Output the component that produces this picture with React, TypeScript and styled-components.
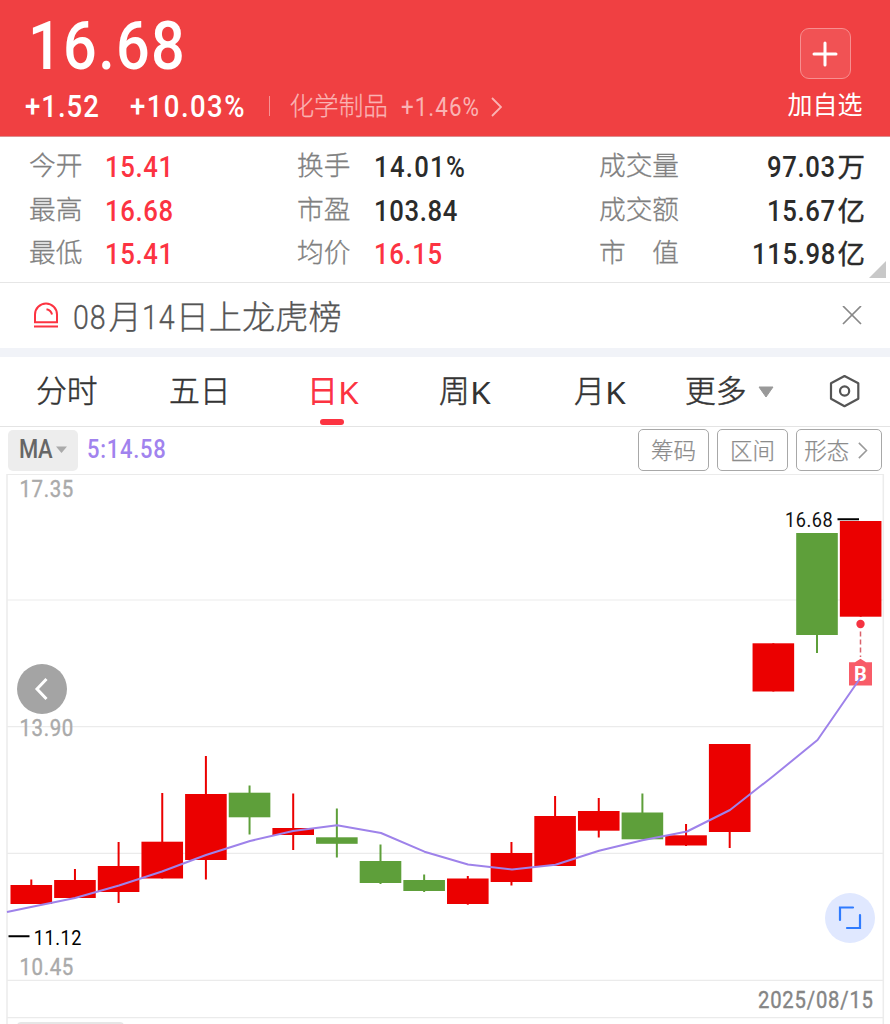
import React from 'react';
import styled, { createGlobalStyle } from 'styled-components';

const GlobalStyle = createGlobalStyle`
  * { box-sizing: border-box; }
  body {
    margin: 0;
    background: #fff;
    overflow: hidden;
    font-family: Roboto, "Noto Sans CJK SC", sans-serif;
  }
`;

const RED = '#fc3341';
const DARK = '#2b2b2b';

const Page = styled.main`
  width: 890px;
  height: 1024px;
  overflow: hidden;
  display: flex;
  flex-direction: column;
  background: #fff;
`;

/* Narrow, evenly spaced digits used for every figure on the page. */
const Num = styled.span<{ $size: number; $w: number; $color?: string; $weight?: number; $spacing?: number }>`
  display: inline-block;
  flex: none;
  width: ${p => p.$w}px;
  font-size: ${p => p.$size}px;
  font-weight: ${p => p.$weight ?? 500};
  color: ${p => p.$color ?? 'inherit'};
  letter-spacing: ${p => p.$spacing ?? 0.032}em;
  white-space: nowrap;
  transform: scaleX(0.88);
  transform-origin: 0 50%;
`;

const Header = styled.header`
  height: 137px;
  flex: none;
  display: flex;
  justify-content: space-between;
  padding: 16px 27px 0 25px;
  background: #f04042;
  border-bottom: 1px solid #dc8e8f;
  color: #fff;
`;

const PriceBlock = styled.div`
  display: flex;
  flex-direction: column;
`;

const Price = styled.div`
  height: 60px;
  line-height: 60px;
  padding-left: 3px;
`;

const ChangeRow = styled.div`
  display: flex;
  align-items: center;
  height: 40px;
  line-height: 40px;
  margin-top: 11px;
`;

const Divider = styled.i`
  width: 1px;
  height: 20px;
  margin: 0 20px 3px 0;
  background: #f79293;
`;

const Sector = styled.span`
  width: 111px;
  font-size: 24.6px;
  font-weight: 300;
  color: #fab3b3;
  -webkit-text-stroke: 0.25px #fab3b3;
`;

const AddBlock = styled.div`
  display: flex;
  flex-direction: column;
  align-items: center;
  padding-top: 12px;
  width: 76px;
`;

const AddBox = styled.button`
  width: 51px;
  height: 51px;
  padding: 0;
  border: 1.5px solid #f78f90;
  border-radius: 9px;
  background: #f15254;
  display: flex;
  align-items: center;
  justify-content: center;
`;

const AddLabel = styled.span`
  font-size: 25px;
  line-height: 36px;
  margin-top: 9px;
  white-space: nowrap;
`;

const Stats = styled.section`
  position: relative;
  flex: none;
  height: 146px;
  padding: 9px 25px 0 29px;
  border-bottom: 1px solid #e6e6e6;
  display: grid;
  grid-template-columns: 76px 192px 76.5px 225.5px 130px 1fr;
  grid-template-rows: repeat(3, 43.6px);
  line-height: 43.6px;
`;

const StatLabel = styled.span`
  font-size: 26.7px;
  font-weight: 300;
  color: #808080;
  -webkit-text-stroke: 0.3px #808080;
  line-height: 40.5px;
  white-space: pre;
`;

const StatValue = styled.span<{ $right?: boolean }>`
  display: flex;
  justify-content: ${p => (p.$right ? 'flex-end' : 'flex-start')};
  font-size: 27.5px;
  font-weight: 500;
  color: ${DARK};
  white-space: nowrap;
`;

const Unit = styled.span`
  font-weight: 400;
  -webkit-text-stroke: 0.4px ${DARK};
`;

const Corner = styled.svg`
  position: absolute;
  right: 4px;
  bottom: 4px;
`;

const Notice = styled.section`
  flex: none;
  height: 65px;
  display: flex;
  align-items: center;
  padding: 1px 28px 0 32px;
  line-height: 60px;
  font-size: 33.2px;
  font-weight: 300;
  color: #555;
  -webkit-text-stroke: 0.3px #555;
`;

const NoticeText = styled.span`
  flex: 1;
  display: flex;
  margin-left: 13px;
  padding-top: 3px;
`;

const Gap = styled.div`
  flex: none;
  height: 9px;
  background: #f1f3f8;
`;

const Tabs = styled.nav`
  flex: none;
  height: 70px;
  display: flex;
  padding-left: 36px;
  border-bottom: 1px solid #e4e4e4;
  line-height: 70px;
  font-size: 30.8px;
  color: #333;
`;

const Tab = styled.span<{ $w: number; $active?: boolean }>`
  position: relative;
  flex: none;
  width: ${p => p.$w}px;
  padding-top: 1px;
  display: flex;
  align-items: center;
  font-weight: 300;
  color: ${p => (p.$active ? RED : '#333')};
  -webkit-text-stroke: ${p => (p.$active ? `0.9px ${RED}` : '0.5px #333')};
`;

const Underline = styled.i`
  position: absolute;
  left: 13px;
  bottom: 1px;
  width: 24px;
  height: 6px;
  border-radius: 3px;
  background: ${RED};
`;

const Latin = styled.span`
  font-family: "Noto Sans", sans-serif;
  font-size: 31px;
  font-weight: 400;
  -webkit-text-stroke: 0;
  transform: scaleX(1.08);
  transform-origin: 0 50%;
`;

const Toolbar = styled.div`
  flex: none;
  height: 47px;
  display: flex;
  align-items: center;
  padding: 0 8px 1px 8px;
  line-height: 42px;
`;

const MaButton = styled.span`
  width: 70px;
  height: 41px;
  display: flex;
  align-items: center;
  padding-left: 11px;
  border-radius: 5px;
  background: #ededed;
  margin-right: 9px;
`;

const Spacer = styled.div`
  flex: 1;
`;

const ToolButton = styled.button<{ $w: number }>`
  width: ${p => p.$w}px;
  height: 42px;
  margin-left: 8px;
  padding: 1px 0 0;
  display: flex;
  align-items: center;
  justify-content: center;
  gap: 9px;
  border: 1.5px solid #a8a8a8;
  border-radius: 5px;
  background: #fff;
  color: #8c8c8c;
  -webkit-text-stroke: 0.25px #8c8c8c;
  font: 300 22.5px/38px Roboto, "Noto Sans CJK SC", sans-serif;
  white-space: nowrap;

  &:last-child {
    padding-right: 6px;
  }
`;

const ChartArea = styled.section`
  position: relative;
  flex: none;
  height: 550px;
`;

const RoundButton = styled.button<{ $x: number; $y: number; $bg: string }>`
  position: absolute;
  left: ${p => p.$x}px;
  top: ${p => p.$y}px;
  width: 50px;
  height: 50px;
  padding: 0;
  border: 0;
  border-radius: 50%;
  background: ${p => p.$bg};
  display: flex;
  align-items: center;
  justify-content: center;
`;

type Candle = { up: boolean; top: number; bottom: number; high: number; low: number };
const c = (up: boolean, top: number, bottom: number, high: number, low: number): Candle => ({ up, top, bottom, high, low });

const candles: Candle[] = [
  c(true, 885, 904, 879.5, 904),
  c(true, 880, 898, 869, 898),
  c(true, 866, 892, 842, 903),
  c(true, 841.7, 878.5, 793, 878.5),
  c(true, 794, 860, 756, 879.5),
  c(false, 792.7, 817.3, 785.5, 834.5),
  c(true, 828, 835, 793.5, 850),
  c(false, 837.3, 843.8, 808.5, 857.5),
  c(false, 861, 883, 844.5, 884),
  c(false, 880, 891, 874.5, 892),
  c(true, 878.5, 904, 876, 904.7),
  c(true, 853, 882, 842, 885.5),
  c(true, 816, 866, 796, 866),
  c(true, 811, 830.7, 798, 837.5),
  c(false, 812.5, 839.3, 793.5, 839.3),
  c(true, 835.3, 845.5, 824, 846),
  c(true, 744, 832, 744, 848),
  c(true, 643.3, 691.5, 643.3, 691.5),
  c(false, 533, 635, 533, 653),
  c(true, 521, 616.7, 521, 616.7),
];

const average = [
  [7, 912], [31, 907], [75, 898], [119, 885.5], [162, 871.5], [206, 855], [250, 841],
  [293, 831], [337, 825.2], [381, 833], [424.5, 851.7], [468, 864.5], [512, 869.5],
  [555.5, 864.7], [599, 850.7], [642.5, 840.3], [687, 831.5], [730, 810], [774, 775.5],
  [817.5, 740], [861, 677],
].map(p => p.join(',')).join(' ');

const gridLines = [474.5, 600, 726.7, 853.3, 980.3, 1017.6];

type LabelProps = { x: number; y: number; size: number; fill: string; children: string; bold?: number; spacing?: string };
const ChartLabel = ({ x, y, size, fill, children, bold = 0, spacing = '0.03em' }: LabelProps) => (
  <text
    transform={`translate(${x} ${y}) scale(0.88 1)`}
    fontSize={size}
    fill={fill}
    stroke={fill}
    strokeWidth={bold}
    letterSpacing={spacing}
    fontFamily="Roboto, sans-serif"
  >
    {children}
  </text>
);

const Chart = () => (
  <svg width="890" height="550" viewBox="0 474 890 550" display="block">
    {gridLines.map(y => (
      <line key={y} x1="7" x2="883" y1={y} y2={y} stroke="#ebebeb" strokeWidth="1.2" />
    ))}
    <path d="M7 474V1024M883.3 474V1024" stroke="#ececec" strokeWidth="1.5" />
    <rect x="17" y="1022" width="107" height="10" rx="4" fill="#e6e6e6" />
    <ChartLabel x={19.5} y={497} size={23.2} fill="#aaa" bold={0.4}>17.35</ChartLabel>
    <ChartLabel x={19.5} y={736} size={23.2} fill="#aaa" bold={0.4}>13.90</ChartLabel>
    <ChartLabel x={19.5} y={975} size={23.2} fill="#aaa" bold={0.4}>10.45</ChartLabel>
    {candles.map((k, i) => {
      const x = 31.3 + i * 43.65;
      const fill = k.up ? '#eb0000' : '#5e9f3a';
      return (
        <g key={i} fill={fill}>
          <rect x={x - 1} y={k.high} width="2" height={k.low - k.high} />
          <rect x={x - 20.8} y={k.top} width="41.6" height={k.bottom - k.top} />
        </g>
      );
    })}
    <path d="M8.5 936.2H29.5M837.5 519.2H859" stroke="#000" strokeWidth="2" />
    <ChartLabel x={33.8} y={944.5} size={20.6} fill="#000">11.12</ChartLabel>
    <ChartLabel x={785} y={527.3} size={20.6} fill="#111">16.68</ChartLabel>
    <circle cx="860.5" cy="624" r="4.2" fill="#f53341" />
    <path d="M860.5 631.5V657" stroke="#d9626b" strokeWidth="1.5" strokeDasharray="5 3" />
    <path d="M849 662.2H855L860.5 658.7L866 662.2H872V685.5H849Z" fill="#f85c68" />
    <text x="860.5" y="681" textAnchor="middle" fontSize="20" fontWeight="700" fontFamily="Roboto, sans-serif" fill="#fff">B</text>
    <polyline points={average} fill="none" stroke="#9e82ea" strokeWidth="2" strokeLinejoin="round" />
    <ChartLabel x={758} y={1007.7} size={23} fill="#858585" bold={0.4} spacing="0.04em">2025/08/15</ChartLabel>
  </svg>
);

const Chevron = ({ size, color }: { size: number; color: string }) => (
  <svg width={size * 0.55} height={size} viewBox="0 0 11 20" fill="none" stroke={color} strokeWidth="1.8">
    <path d="M1 1L10 10L1 19" />
  </svg>
);

type StatItem = { label: string; value: string; w: number; red?: boolean; unit?: string };
const stats: StatItem[] = [
  { label: '今开', value: '15.41', w: 69, red: true },
  { label: '换手', value: '14.01%', w: 90 },
  { label: '成交量', value: '97.03', w: 71, unit: '万' },
  { label: '最高', value: '16.68', w: 69, red: true },
  { label: '市盈', value: '103.84', w: 90 },
  { label: '成交额', value: '15.67', w: 71, unit: '亿' },
  { label: '最低', value: '15.41', w: 69, red: true },
  { label: '均价', value: '16.15', w: 69, red: true },
  { label: '市　值', value: '115.98', w: 86, unit: '亿' },
];

export default function App() {
  return (
    <Page>
      <GlobalStyle />
      <Header>
        <PriceBlock>
          <Price><Num $size={67.5} $w={170} $spacing={0.022}>16.68</Num></Price>
          <ChangeRow>
            <Num $size={31.3} $w={105} $spacing={0.036}>+1.52</Num>
            <Num $size={31.3} $w={138.5} $spacing={0.052}>+10.03%</Num>
            <Divider />
            <Sector>化学制品</Sector>
            <Num $size={25.5} $w={90} $weight={400} $color="#fab3b3" $spacing={0.045}>+1.46%</Num>
            <Chevron size={20} color="#fab3b3" />
          </ChangeRow>
        </PriceBlock>
        <AddBlock>
          <AddBox>
            <svg width="26" height="26" stroke="#fff" strokeWidth="3" strokeLinecap="round">
              <path d="M13 2V24M2 13H24" />
            </svg>
          </AddBox>
          <AddLabel>加自选</AddLabel>
        </AddBlock>
      </Header>

      <Stats>
        {stats.map((s, i) => (
          <React.Fragment key={i}>
            <StatLabel>{s.label}</StatLabel>
            <StatValue $right={!!s.unit}>
              <Num $size={29.2} $w={s.w} $color={s.red ? RED : DARK} $spacing={s.value.endsWith('%') ? 0.05 : 0.026}>
                {s.value}
              </Num>
              {s.unit && <Unit>{s.unit}</Unit>}
            </StatValue>
          </React.Fragment>
        ))}
        <Corner width="17" height="17"><path d="M17 0V17H0Z" fill="#c8c8c8" /></Corner>
      </Stats>

      <Notice>
        <svg width="28" height="28" viewBox="0 0 28 28" fill="none" stroke={RED} strokeWidth="2">
          <path d="M3 20.3V12.5A11 11 0 0 1 25 12.5V20.3ZM2 24.6H26" />
          <path d="M14.5 7.3Q19 8.3 20 12.5" />
        </svg>
        <NoticeText>
          <Num $size={32.5} $w={35.5} $weight={300}>08</Num>月
          <Num $size={32.5} $w={34} $weight={300}>14</Num>日上龙虎榜
        </NoticeText>
        <svg width="20" height="20" stroke="#888" strokeWidth="1.7"><path d="M1 0L19 18M19 0L1 18" /></svg>
      </Notice>

      <Gap />

      <Tabs>
        <Tab $w={133}>分时</Tab>
        <Tab $w={138}>五日</Tab>
        <Tab $w={132} $active>日<Latin>K</Latin><Underline /></Tab>
        <Tab $w={135}>周<Latin>K</Latin></Tab>
        <Tab $w={111}>月<Latin>K</Latin></Tab>
        <Tab $w={144}>
          更多
          <svg width="16" height="12" style={{ marginLeft: 11 }}><path d="M1 1H15L8 11Z" fill="#999" stroke="#999" /></svg>
        </Tab>
        <Tab $w={40}>
          <svg width="32" height="34" viewBox="0 0 32 34" fill="none" stroke="#555" strokeWidth="2.2" strokeLinejoin="round">
            <path d="M15.5 1L29.3 8.2V23.7L15.5 31.2L2 23.7V8.2Z" />
            <circle cx="15.6" cy="16" r="4.6" />
          </svg>
        </Tab>
      </Tabs>

      <Toolbar>
        <MaButton>
          <Num $size={25} $w={37} $color="#666" $spacing={-0.02}>MA</Num>
          <svg width="11" height="8"><path d="M0 0.5H11L5.5 7Z" fill="#aaa" /></svg>
        </MaButton>
        <Num $size={25} $w={90} $color="#a183ee">5:14.58</Num>
        <Spacer />
        <ToolButton $w={71}>筹码</ToolButton>
        <ToolButton $w={71}>区间</ToolButton>
        <ToolButton $w={86}>形态<Chevron size={17} color="#999" /></ToolButton>
      </Toolbar>

      <ChartArea>
        <Chart />
        <RoundButton $x={17} $y={190} $bg="#a4a4a4">
          <svg width="16" height="24" fill="none" stroke="#fff" strokeWidth="3"><path d="M12.5 2L3 12L12.5 22" /></svg>
        </RoundButton>
        <RoundButton $x={825} $y={419} $bg="#e0e8ff">
          <svg width="24" height="24" fill="none" stroke="#2f7bff" strokeWidth="2.2" strokeLinecap="round">
            <path d="M2 14V1.5H15M22 9V22H9" />
          </svg>
        </RoundButton>
      </ChartArea>
    </Page>
  );
}
